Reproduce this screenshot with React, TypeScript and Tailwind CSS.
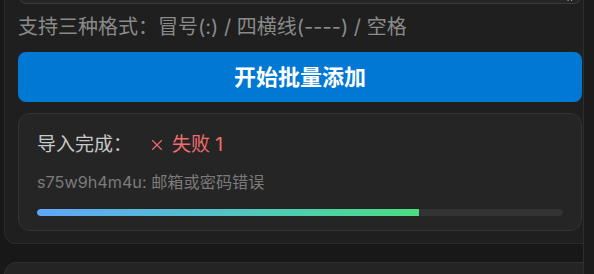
import { X } from "lucide-react";

function ResizeGrip() {
  return (
    <svg className="absolute right-[6px] bottom-[2px]" width="9" height="9" viewBox="0 0 9 9">
      <path d="M8 2 L2 8 M8 5.5 L5.5 8" stroke="#d0d0d0" strokeWidth="1.2" strokeLinecap="round" />
    </svg>
  );
}

function ResultCard() {
  const progress = 72.7;
  return (
    <div className="mt-[11px] rounded-[12px] border border-[#343434] bg-[#252525] px-[18px] pt-[18px] pb-[14px]">
      <div className="flex items-center text-[19px] leading-[26px]">
        <span className="text-[#c8c8c8]">导入完成：</span>
        <span className="ml-[16px] flex items-center gap-[6px] text-[#f26d6d]">
          <X className="h-[18px] w-[18px]" strokeWidth={1.5} />
          失败 1
        </span>
      </div>
      <p className="mt-[13px] text-[16.2px] leading-[22px] text-[#7b7b7b]">s75w9h4m4u: 邮箱或密码错误</p>
      <div className="mt-[16px] h-[7px] w-full overflow-hidden rounded-full bg-[#333333]">
        <div
          className="h-full rounded-l-full bg-gradient-to-r from-[#60a5fa] to-[#4ade80]"
          style={{ width: `${progress}%` }}
        />
      </div>
    </div>
  );
}

export default function App() {
  return (
    <div className="relative h-[274px] w-[594px] overflow-hidden bg-[#181818] font-['Inter','Noto_Sans_CJK_SC',sans-serif]">
      <div className="-mt-[90px] ml-[4px] w-[592px] rounded-b-[12px] border border-t-0 border-[#2c2c2c] bg-[#1f1f1f] px-[13px] pt-[14px] pb-[12px]">
        <div className="relative h-[80px] rounded-[8px] border border-[#3a3a3a] bg-[#262626]">
          <ResizeGrip />
        </div>
        <p className="mt-[11px] text-[20px] leading-[25px] text-[#8a8a8a]">
          支持三种格式：冒号(:) / 四横线(----) / 空格
        </p>
        <button className="mt-[12px] flex h-[50px] w-full items-center justify-center rounded-[8px] bg-[#0078d4] text-[22px] font-bold text-white">
          开始批量添加
        </button>
        <ResultCard />
      </div>
      <div className="mt-[18px] ml-[4px] h-[40px] w-[592px] rounded-t-[12px] border border-[#303030] bg-[#242424]" />
      <div className="absolute top-0 right-0 h-full w-[11px] border-l border-[#2e2e2e] bg-[#1b1b1b]" />
    </div>
  );
}
